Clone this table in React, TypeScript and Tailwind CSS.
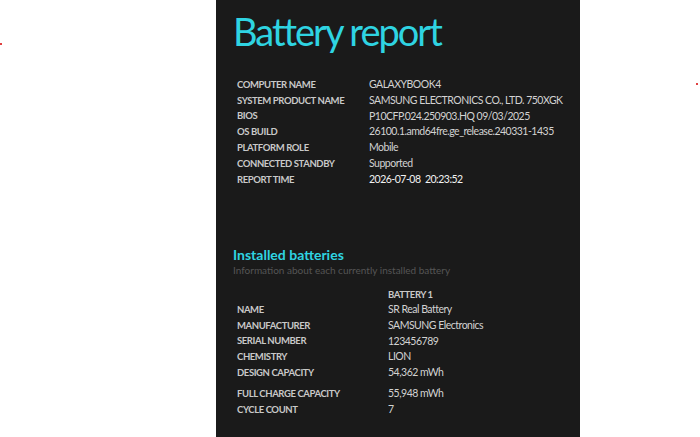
import React from "react";

const info: [string, string][] = [
  ["COMPUTER NAME", "GALAXYBOOK4"],
  ["SYSTEM PRODUCT NAME", "SAMSUNG ELECTRONICS CO., LTD. 750XGK"],
  ["BIOS", "P10CFP.024.250903.HQ 09/03/2025"],
  ["OS BUILD", "26100.1.amd64fre.ge_release.240331-1435"],
  ["PLATFORM ROLE", "Mobile"],
  ["CONNECTED STANDBY", "Supported"],
  ["REPORT TIME", "2026-07-08  20:23:52"],
];

const bat: [string, string, string][] = [
  ["NAME", "SR Real Battery", "mt-0"],
  ["MANUFACTURER", "SAMSUNG Electronics", "mt-0"],
  ["SERIAL NUMBER", "123456789", "mt-0"],
  ["CHEMISTRY", "LION", "mt-0"],
  ["DESIGN CAPACITY", "54,362 mWh", "mt-0"],
  ["FULL CHARGE CAPACITY", "55,948 mWh", "mt-[5px]"],
  ["CYCLE COUNT", "7", "mt-0"],
];

export default function App() {
  return (
    <div
      className="relative w-[700px] h-[437px] bg-white overflow-hidden flex"
      style={{ fontFamily: 'Lato, "Open Sans", sans-serif' }}
    >
      <div className="absolute left-[0px] top-[43px] w-[2px] h-[2px] bg-[#e04040]" />
      <div className="absolute left-[696px] top-[83px] w-[2px] h-[2px] bg-[#e04040]" />
      <div className="ml-[216px] w-[364px] h-full bg-[#1a1a1a] pl-[17px] flex flex-col">
        <h1 className="text-[#2fd4e2] text-[38px] leading-none mt-[12px] tracking-[-2px] whitespace-nowrap">
          Battery report
        </h1>
        <div className="mt-[27px] flex flex-col">
          {info.map(([k, v]) => (
            <div key={k} className="flex items-center h-[15.8px]">
              <div className="w-[136px] shrink-0 pl-[4px] text-[9.5px] tracking-[-0.4px] font-bold text-[#c9c9c9] whitespace-nowrap">
                {k}
              </div>
              <div
                className={`text-[10.5px] tracking-[-0.5px] whitespace-pre ${k === "REPORT TIME" ? "text-[#f2f2f2]" : "text-[#d2d2d2]"}`}
              >
                {v}
              </div>
            </div>
          ))}
        </div>
        <div className="mt-[60px] text-[14px] font-bold text-[#2fd4e2] leading-none">Installed batteries</div>
        <div className="mt-[3px] text-[10px] text-[#555555] leading-none whitespace-nowrap">
          Information about each currently installed battery
        </div>
        <div className="mt-[15px] ml-[155px] text-[9.5px] tracking-[-0.4px] font-bold text-[#c9c9c9] leading-none">
          BATTERY 1
        </div>
        <div className="mt-[3px] flex flex-col">
          {bat.map(([k, v, m]) => (
            <div key={k} className={`flex items-center h-[15.8px] ${m}`}>
              <div className="w-[155px] shrink-0 pl-[4px] text-[9.5px] tracking-[-0.4px] font-bold text-[#c9c9c9] whitespace-nowrap">
                {k}
              </div>
              <div className="text-[10.5px] tracking-[-0.5px] text-[#d2d2d2] whitespace-nowrap">{v}</div>
            </div>
          ))}
        </div>
      </div>
    </div>
  );
}
